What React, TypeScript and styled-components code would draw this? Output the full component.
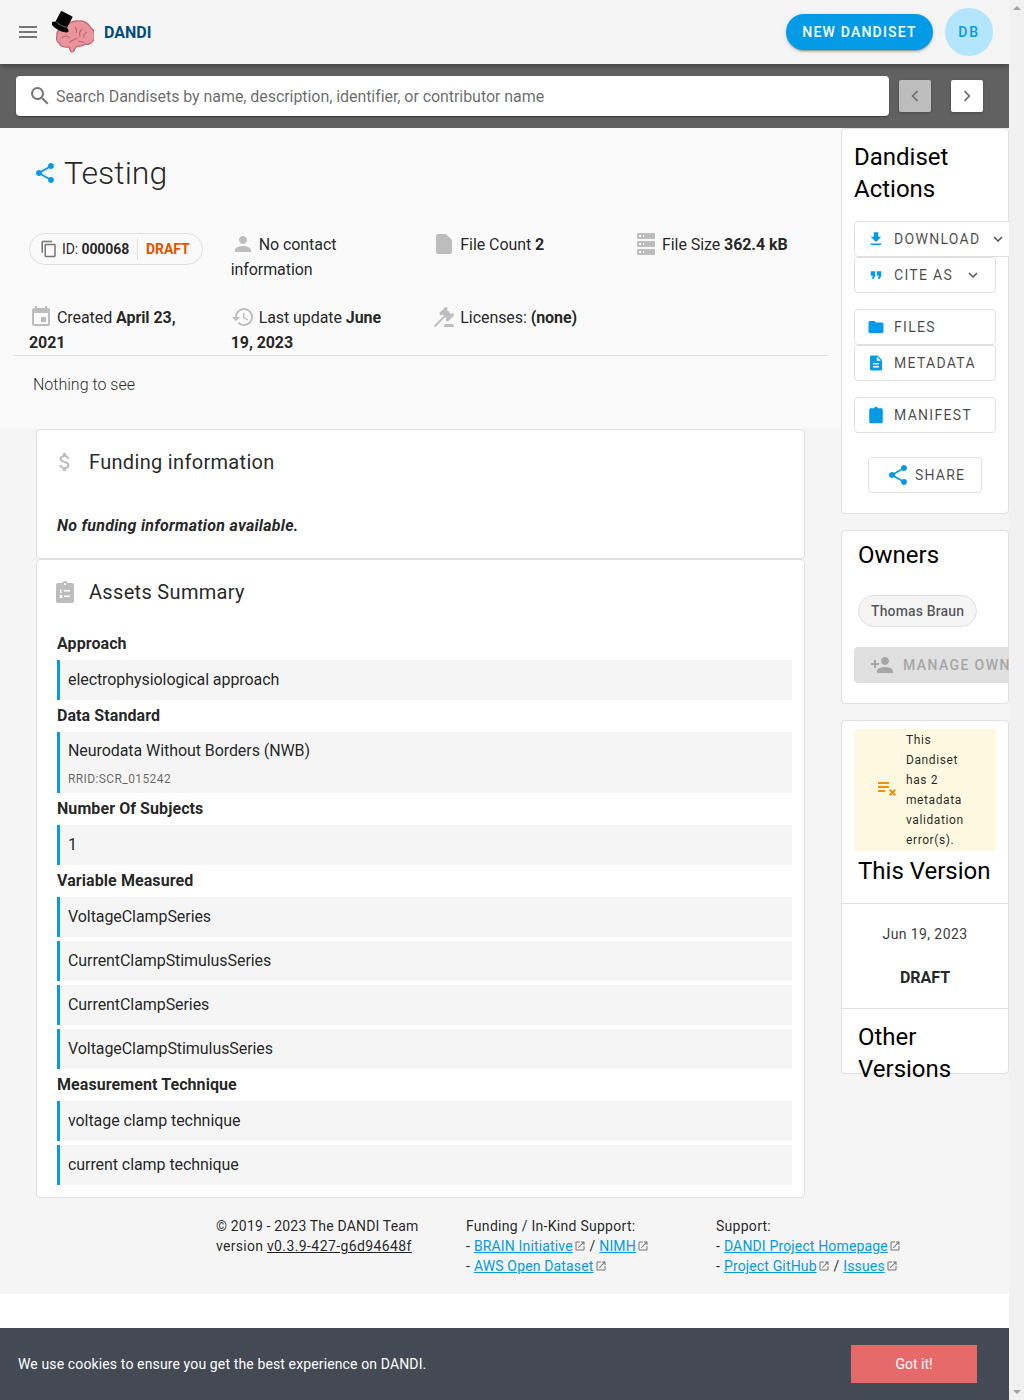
import { ReactNode } from "react";
import styled, { createGlobalStyle } from "styled-components";
import {
  MdAttachMoney,
  MdChevronLeft,
  MdChevronRight,
  MdContentCopy,
  MdDescription,
  MdEvent,
  MdExpandMore,
  MdFileDownload,
  MdFolder,
  MdFormatQuote,
  MdHistory,
  MdMenu,
  MdOpenInNew,
  MdPerson,
  MdPersonAdd,
  MdSearch,
  MdShare,
} from "react-icons/md";

const BLUE = "#039be5";
const ICON_GREY = "#bdbdbd";

const GlobalStyle = createGlobalStyle`
  html, body {
    margin: 0;
    padding: 0;
    background: #fff;
    overflow: hidden;
  }
  body {
    font-family: Roboto, "Liberation Sans", sans-serif;
    color: rgba(0, 0, 0, 0.87);
  }
  * {
    box-sizing: border-box;
  }
`;

const Frame = styled.div`
  display: flex;
  width: 1024px;
  height: 1400px;
  overflow: hidden;
`;

const Page = styled.div`
  display: flex;
  flex-direction: column;
  width: 1009px;
  height: 1400px;
  overflow: hidden;
  background: #fff;
`;

const ScrollTrack = styled.div`
  display: flex;
  flex-direction: column;
  justify-content: space-between;
  align-items: center;
  width: 15px;
  padding: 6px 0;
  background: #f1f1f1;
`;

const ScrollArrow = styled.span<{ $down?: boolean }>`
  width: 0;
  height: 0;
  border-left: 4px solid transparent;
  border-right: 4px solid transparent;
  ${(p) =>
    p.$down
      ? "border-top: 4px solid #a3a3a3;"
      : "border-bottom: 4px solid #a3a3a3;"}
`;

/* top bar */
const AppBar = styled.header`
  position: relative;
  z-index: 2;
  display: flex;
  align-items: center;
  flex: none;
  height: 64px;
  padding: 0 16px;
  background: #f5f5f5;
  box-shadow: 0 2px 4px -1px rgba(0, 0, 0, 0.2), 0 4px 5px rgba(0, 0, 0, 0.14);
`;

const MenuButton = styled.span`
  display: flex;
  color: #757575;
  font-size: 24px;
`;

const LogoBox = styled.span`
  display: flex;
  margin-left: 12px;
`;

const BrandName = styled.span`
  margin-left: 10px;
  font-size: 16px;
  font-weight: 700;
  color: #004c7f;
`;

const Spacer = styled.div`
  flex: 1;
`;

const NewButton = styled.button`
  width: 147px;
  height: 36px;
  padding: 0;
  border: none;
  border-radius: 18px;
  background: ${BLUE};
  color: #fff;
  font: 500 14px Roboto, sans-serif;
  letter-spacing: 1.2px;
  box-shadow: 0 3px 1px -2px rgba(0, 0, 0, 0.2), 0 2px 2px rgba(0, 0, 0, 0.14),
    0 1px 5px rgba(0, 0, 0, 0.12);
`;

const Avatar = styled.span`
  display: flex;
  align-items: center;
  justify-content: center;
  width: 48px;
  height: 48px;
  margin-left: 12px;
  border-radius: 50%;
  background: #b3e5fc;
  color: ${BLUE};
  font-size: 14px;
  font-weight: 500;
  letter-spacing: 1.8px;
`;

/* search strip */
const SearchStrip = styled.div`
  display: flex;
  align-items: center;
  flex: none;
  height: 64px;
  padding: 0 26px 0 16px;
  background: #616161;
`;

const SearchBox = styled.div`
  display: flex;
  align-items: center;
  width: 873px;
  height: 40px;
  padding-left: 12px;
  border-radius: 4px;
  background: #fff;
  color: rgba(0, 0, 0, 0.6);
  font-size: 16px;
  letter-spacing: -0.06px;
  box-shadow: 0 2px 1px -1px rgba(0, 0, 0, 0.2), 0 1px 1px rgba(0, 0, 0, 0.14),
    0 1px 3px rgba(0, 0, 0, 0.12);
  svg {
    margin-right: 4px;
    color: #757575;
  }
`;

const PageButton = styled.span<{ $disabled?: boolean }>`
  display: flex;
  align-items: center;
  justify-content: center;
  width: 32px;
  height: 32px;
  margin-left: ${(p) => (p.$disabled ? "10px" : "20px")};
  border-radius: 2px;
  background: ${(p) => (p.$disabled ? ICON_GREY : "#fff")};
  color: #757575;
  box-shadow: 0 1px 3px rgba(0, 0, 0, 0.25);
`;

/* body */
const Body = styled.div`
  display: flex;
  flex: none;
  height: 1070px;
  background: #f5f5f5;
`;

const LeftColumn = styled.main`
  width: 841px;
  flex: none;
`;

const HeaderPanel = styled.section`
  height: 301px;
  padding: 25px 13px 0 14px;
  border-radius: 4px 4px 0 0;
  background: #fafafa;
`;

const TitleRow = styled.div`
  display: flex;
  align-items: center;
  height: 40px;
  padding-left: 19px;
`;

const DandisetTitle = styled.h1`
  margin: 0 0 0 7px;
  font-size: 32px;
  font-weight: 300;
  line-height: 40px;
`;

const MetaGrid = styled.div`
  display: grid;
  grid-template-columns: repeat(4, 201.67px);
  grid-template-rows: 50px 50px;
  row-gap: 23px;
  margin-top: 39px;
  padding: 0 0 0 15px;
  line-height: 25px;
`;

const MetaItem = styled.div`
  max-width: 172px;
  font-size: 16px;
  letter-spacing: -0.07px;
  svg {
    margin-right: 4px;
    color: ${ICON_GREY};
    vertical-align: -6px;
  }
`;

const IdChip = styled.div`
  display: inline-flex;
  align-items: center;
  width: 174px;
  height: 32px;
  margin-top: 1px;
  padding-left: 10px;
  border: 1px solid #e0e0e0;
  border-radius: 16px;
  font-size: 14px;
  line-height: 20px;
  letter-spacing: -0.1px;
  white-space: nowrap;
  svg {
    margin-right: 4px;
    color: #757575;
  }
`;

const ChipDivider = styled.span`
  width: 1px;
  height: 22px;
  margin: 0 8px;
  background: #e0e0e0;
`;

const DraftTag = styled.strong`
  color: #e65100;
`;

const Divider = styled.hr`
  margin: 0;
  border: none;
  border-top: 1px solid #e0e0e0;
`;

const Overview = styled.p`
  margin: 17px 0 0 19px;
  font-size: 16px;
  font-weight: 300;
  line-height: 24px;
`;

const InfoCard = styled.section`
  width: 769px;
  margin-left: 36px;
  padding: 0 12px 0 20px;
  border: 1px solid #e0e0e0;
  border-radius: 4px;
  background: #fff;
`;

const CardTitle = styled.h2`
  display: flex;
  align-items: center;
  height: 24px;
  margin: 20px 0 0 -4px;
  font-size: 20px;
  font-weight: 400;
  letter-spacing: 0.32px;
  svg {
    flex: none;
    margin-right: 12px;
    color: ${ICON_GREY};
  }
`;

const FundingCard = styled(InfoCard)`
  height: 130px;
  overflow: hidden;
`;

const AssetsCard = styled(InfoCard)`
  height: 639px;
  padding-bottom: 8px;
`;

const EmptyNote = styled.p`
  margin: 40px 0 0;
  font-size: 16px;
  font-weight: 700;
  font-style: italic;
  line-height: 24px;
  letter-spacing: 0.27px;
`;

const AssetList = styled.div`
  margin-top: 28px;
`;

const AssetLabel = styled.div`
  height: 24px;
  margin-bottom: 4px;
  font-size: 16px;
  font-weight: 700;
  line-height: 24px;
  letter-spacing: 0.08px;
`;

const AssetItem = styled.div<{ $noted?: boolean }>`
  display: flex;
  flex-direction: column;
  justify-content: center;
  min-height: 40px;
  margin-bottom: 4px;
  padding: ${(p) => (p.$noted ? "7px 0 2px 8px" : "0 0 0 8px")};
  border-left: 3px solid ${BLUE};
  background: #f5f5f5;
  font-size: 16px;
  line-height: 24px;
  letter-spacing: -0.07px;
`;

const AssetNote = styled.span`
  margin-top: 4px;
  font-size: 12px;
  line-height: 24px;
  color: rgba(0, 0, 0, 0.6);
  letter-spacing: 0.4px;
`;

/* sidebar */
const Sidebar = styled.aside`
  display: flex;
  flex-direction: column;
  width: 168px;
  flex: none;
`;

const SideCard = styled.section<{ $height: number; $gap?: number }>`
  flex: none;
  height: ${(p) => p.$height}px;
  margin-top: ${(p) => p.$gap ?? 0}px;
  border: 1px solid #e0e0e0;
  border-radius: 4px;
  background: #fff;
  color: #000;
`;

const SideHeading = styled.h3<{ $inset?: number; $top?: number }>`
  margin: ${(p) => p.$top ?? 0}px 0 0 ${(p) => p.$inset ?? 16}px;
  font-size: 24px;
  font-weight: 400;
  line-height: 32px;
`;

const ActionStack = styled.div`
  display: flex;
  flex-direction: column;
  align-items: flex-start;
  padding-left: 12px;
`;

const ActionButton = styled.span<{ $wide?: boolean; $top?: number }>`
  display: flex;
  align-items: center;
  flex: none;
  width: ${(p) => (p.$wide ? "165px" : "142px")};
  height: 36px;
  margin-top: ${(p) => p.$top ?? 0}px;
  padding-left: 12px;
  border: 1px solid #e0e0e0;
  border-radius: 4px;
  background: #fff;
  color: rgba(0, 0, 0, 0.72);
  font-size: 14px;
  letter-spacing: 1.3px;
  white-space: nowrap;
`;

const ActionIcon = styled.span`
  display: flex;
  justify-content: center;
  width: 18px;
  margin-right: 9px;
  color: ${BLUE};
`;

const Caret = styled.span<{ $left: number }>`
  display: flex;
  margin-left: ${(p) => p.$left}px;
  color: #555;
`;

const ShareButton = styled.span`
  display: flex;
  align-items: center;
  width: 114px;
  height: 36px;
  margin: 24px 0 0 26px;
  padding-left: 17px;
  border: 1px solid #e0e0e0;
  border-radius: 4px;
  color: rgba(0, 0, 0, 0.72);
  font-size: 14px;
  letter-spacing: 1.2px;
  svg {
    margin-right: 5px;
    color: ${BLUE};
  }
`;

const OwnerChip = styled.span`
  display: inline-flex;
  align-items: center;
  height: 32px;
  margin: 24px 0 0 16px;
  padding: 0 12px;
  border: 1px solid #e0e0e0;
  border-radius: 16px;
  background: #f5f5f5;
  color: rgba(0, 0, 0, 0.66);
  font-size: 14px;
  font-weight: 500;
  letter-spacing: 0.15px;
`;

const ManageButton = styled.span`
  display: flex;
  align-items: center;
  width: 190px;
  height: 36px;
  margin: 20px 0 0 12px;
  padding-left: 16px;
  border-radius: 4px;
  background: #e0e0e0;
  color: #a6a6a6;
  font-size: 14px;
  font-weight: 500;
  letter-spacing: 1.4px;
  white-space: nowrap;
  svg {
    margin-right: 9px;
  }
`;

const ValidationAlert = styled.div`
  display: flex;
  align-items: center;
  width: 142px;
  height: 122px;
  margin: 8px 0 0 12px;
  padding-left: 23px;
  border-radius: 4px;
  background: #fff8e1;
  color: rgba(0, 0, 0, 0.87);
  font-size: 12px;
  line-height: 20px;
  letter-spacing: 0.6px;
  svg {
    flex: none;
    margin-right: 9px;
  }
`;

const AlertText = styled.span`
  width: 62px;
`;

const VersionDivider = styled.hr<{ $top: number }>`
  margin: ${(p) => p.$top}px 0 0;
  border: none;
  border-top: 1px solid #e0e0e0;
`;

const VersionDate = styled.div`
  margin-top: 20px;
  text-align: center;
  font-size: 14px;
  line-height: 20px;
  letter-spacing: 0.4px;
  color: rgba(0, 0, 0, 0.8);
`;

const VersionName = styled.div`
  margin-top: 24px;
  text-align: center;
  font-size: 16px;
  font-weight: 700;
  line-height: 20px;
  color: rgba(0, 0, 0, 0.87);
`;

/* footer */
const Footer = styled.footer`
  display: grid;
  grid-template-columns: repeat(3, 250px);
  flex: none;
  height: 96px;
  padding: 18px 0 0 216px;
  background: #f5f5f5;
  font-size: 14px;
  line-height: 20px;
  letter-spacing: 0.28px;
`;

const FooterLine = styled.div<{ $tight?: boolean }>`
  white-space: nowrap;
  ${(p) => p.$tight && "letter-spacing: 0.17px;"}
`;

const VersionLink = styled.span`
  text-decoration: underline;
  letter-spacing: 0.4px;
`;

const Ext = styled.a`
  color: ${BLUE};
  text-decoration: underline;
  letter-spacing: 0.15px;
`;

const ExtMark = styled.span`
  display: inline-block;
  width: 12px;
  margin-left: 1px;
  color: #757575;
  svg {
    vertical-align: -1px;
  }
`;

const FooterGap = styled.div`
  flex: none;
  height: 34px;
`;

const CookieBar = styled.div`
  display: flex;
  align-items: center;
  justify-content: space-between;
  flex: none;
  height: 72px;
  padding: 0 32px 0 18px;
  background: #434a54;
  color: #fff;
  font-size: 14px;
  letter-spacing: 0.13px;
`;

const CookieButton = styled.button`
  width: 126px;
  height: 38px;
  border: none;
  background: #e76a6a;
  color: #fff;
  font: 400 14px Roboto, sans-serif;
`;

function BrainLogo() {
  return (
    <svg width="42" height="42" viewBox="0 0 42 42" aria-hidden="true">
      <path
        d="M5 25C4 20 8 17 12 18C15 12 21 9 27 10C32 9 37 13 39 17C43 20 44 26 41 30C39 33 36 34 33 33C30 36 26 35 24 36C23 38 22 41 20 41C18 41 18 38 17 36C12 37 8 35 7 32C5 31 4 28 5 25Z"
        fill="#e8959b"
        stroke="#c2666f"
        strokeWidth="1.2"
      />
      <path
        d="M10 27c3-3 6-2 8 0m-1 5c2-3 6-3 8-5m5-9c-2 2-3 5-2 8m7-5c-2 1-4 3-3 6m-9-11c2 2 2 4 1 6m8 9c-2 0-4 0-6-1"
        fill="none"
        stroke="#c2666f"
        strokeWidth="1.1"
      />
      <g transform="translate(8 16) rotate(28)">
        <rect x="-6.5" y="-15" width="13" height="15" rx="1" fill="#000" />
        <ellipse cx="0" cy="0" rx="9.5" ry="3.4" fill="#000" />
        <path d="M-6-3c3 1.5 9 1.5 12 0" fill="none" stroke="#9a9a9a" strokeWidth="0.6" />
      </g>
    </svg>
  );
}

function ClipboardNumbers({ size }: { size: number }) {
  return (
    <svg width={size} height={size} viewBox="0 0 24 24" fill="currentColor" aria-hidden="true">
      <path d="M19 3h-4.2C14.4 1.8 13.3 1 12 1s-2.4.8-2.8 2H5c-1.1 0-2 .9-2 2v16c0 1.1.9 2 2 2h14c1.1 0 2-.9 2-2V5c0-1.1-.9-2-2-2zm-7 0c.6 0 1 .4 1 1s-.4 1-1 1-1-.4-1-1 .4-1 1-1z" />
      <path d="M7 9.5h1.4V13H7zM11 10h6v1.6h-6zM11 15.5h6v1.6h-6zM6.5 15h3v1l-1.6 1.2h1.6V18h-3v-1l1.6-1.2H6.5z" fill="#fff" />
    </svg>
  );
}

function ClipboardSolid({ size }: { size: number }) {
  return (
    <svg width={size} height={size} viewBox="0 0 24 24" fill="currentColor" aria-hidden="true">
      <path d="M19 3h-4.2C14.4 1.8 13.3 1 12 1s-2.4.8-2.8 2H5c-1.1 0-2 .9-2 2v16c0 1.1.9 2 2 2h14c1.1 0 2-.9 2-2V5c0-1.1-.9-2-2-2z" />
    </svg>
  );
}

function FileSolid() {
  return (
    <svg width="24" height="24" viewBox="0 0 24 24" fill="currentColor" aria-hidden="true">
      <path d="M6 2a2 2 0 0 0-2 2v16a2 2 0 0 0 2 2h12a2 2 0 0 0 2-2V8l-6-6z" />
    </svg>
  );
}

function ServerStack() {
  return (
    <svg width="24" height="24" viewBox="0 0 24 24" fill="currentColor" fillRule="evenodd" aria-hidden="true">
      <path d="M4,1H20A1,1 0 0,1 21,2V6A1,1 0 0,1 20,7H4A1,1 0 0,1 3,6V2A1,1 0 0,1 4,1M4,9H20A1,1 0 0,1 21,10V14A1,1 0 0,1 20,15H4A1,1 0 0,1 3,14V10A1,1 0 0,1 4,9M4,17H20A1,1 0 0,1 21,18V22A1,1 0 0,1 20,23H4A1,1 0 0,1 3,22V18A1,1 0 0,1 4,17M9,5H10V3H9V5M9,13H10V11H9V13M9,21H10V19H9V21M5,3V5H7V3H5M5,11V13H7V11H5M5,19V21H7V19H5Z" />
    </svg>
  );
}

function Gavel() {
  return (
    <svg width="24" height="24" viewBox="0 0 24 24" fill="currentColor" aria-hidden="true">
      <path d="M2.3,20.28L11.9,10.68L10.5,9.26L9.78,9.97C9.39,10.36 8.76,10.36 8.37,9.97L7.66,9.26C7.27,8.87 7.27,8.24 7.66,7.85L13.32,2.19C13.71,1.8 14.34,1.8 14.73,2.19L15.44,2.9C15.83,3.29 15.83,3.92 15.44,4.31L14.73,5L16.15,6.43C16.54,6.04 17.17,6.04 17.56,6.43C17.95,6.82 17.95,7.46 17.56,7.85L18.97,9.26L19.68,8.55C20.07,8.16 20.71,8.16 21.1,8.55L21.8,9.26C22.19,9.65 22.19,10.29 21.8,10.68L16.15,16.33C15.76,16.72 15.12,16.72 14.73,16.33L14.03,15.63C13.63,15.24 13.63,14.6 14.03,14.21L14.73,13.5L13.32,12.09L3.71,21.7C3.32,22.09 2.69,22.09 2.3,21.7C1.91,21.31 1.91,20.67 2.3,20.28M20,19A2,2 0 0,1 22,21V22H12V21A2,2 0 0,1 14,19H20Z" />
    </svg>
  );
}

function PlaylistError() {
  return (
    <svg width="20" height="20" viewBox="0 0 20 20" fill="#fb8c00" aria-hidden="true">
      <path d="M1 2h11v2H1zM1 6h11v2H1zM1 10h7v2H1z" />
      <path d="M12 10.4l1.4-1.4 2.1 2.1L17.6 9l1.4 1.4-2.1 2.1 2.1 2.1-1.4 1.4-2.1-2.1-2.1 2.1-1.4-1.4 2.1-2.1z" />
    </svg>
  );
}

function ExternalLink({ children }: { children: ReactNode }) {
  return (
    <>
      <Ext href="#">{children}</Ext>
      <ExtMark>
        <MdOpenInNew size={12} />
      </ExtMark>
    </>
  );
}

const assetGroups: { label: string; items: { text: string; note?: string }[] }[] = [
  { label: "Approach", items: [{ text: "electrophysiological approach" }] },
  {
    label: "Data Standard",
    items: [{ text: "Neurodata Without Borders (NWB)", note: "RRID:SCR_015242" }],
  },
  { label: "Number Of Subjects", items: [{ text: "1" }] },
  {
    label: "Variable Measured",
    items: [
      { text: "VoltageClampSeries" },
      { text: "CurrentClampStimulusSeries" },
      { text: "CurrentClampSeries" },
      { text: "VoltageClampStimulusSeries" },
    ],
  },
  {
    label: "Measurement Technique",
    items: [{ text: "voltage clamp technique" }, { text: "current clamp technique" }],
  },
];

export default function App() {
  return (
    <Frame>
      <GlobalStyle />
      <Page>
        <AppBar>
          <MenuButton>
            <MdMenu size={24} />
          </MenuButton>
          <LogoBox>
            <BrainLogo />
          </LogoBox>
          <BrandName>DANDI</BrandName>
          <Spacer />
          <NewButton>NEW DANDISET</NewButton>
          <Avatar>DB</Avatar>
        </AppBar>

        <SearchStrip>
          <SearchBox>
            <MdSearch size={24} />
            Search Dandisets by name, description, identifier, or contributor name
          </SearchBox>
          <PageButton $disabled>
            <MdChevronLeft size={22} />
          </PageButton>
          <PageButton>
            <MdChevronRight size={22} />
          </PageButton>
        </SearchStrip>

        <Body>
          <LeftColumn>
            <HeaderPanel>
              <TitleRow>
                <MdShare size={24} color={BLUE} />
                <DandisetTitle>Testing</DandisetTitle>
              </TitleRow>
              <MetaGrid>
                <div>
                  <IdChip>
                    <MdContentCopy size={18} />
                    ID:&nbsp;<strong>000068</strong>
                    <ChipDivider />
                    <DraftTag>DRAFT</DraftTag>
                  </IdChip>
                </div>
                <MetaItem>
                  <MdPerson size={24} />
                  No contact information
                </MetaItem>
                <MetaItem>
                  <FileSolid />
                  File Count <strong>2</strong>
                </MetaItem>
                <MetaItem>
                  <ServerStack />
                  File Size <strong>362.4 kB</strong>
                </MetaItem>
                <MetaItem>
                  <MdEvent size={24} />
                  Created <strong>April 23, 2021</strong>
                </MetaItem>
                <MetaItem>
                  <MdHistory size={24} />
                  Last update <strong>June 19, 2023</strong>
                </MetaItem>
                <MetaItem>
                  <Gavel />
                  Licenses: <strong>(none)</strong>
                </MetaItem>
              </MetaGrid>
              <Divider />
              <Overview>Nothing to see</Overview>
            </HeaderPanel>

            <FundingCard>
              <CardTitle>
                <MdAttachMoney size={24} />
                Funding information
              </CardTitle>
              <EmptyNote>No funding information available.</EmptyNote>
            </FundingCard>

            <AssetsCard>
              <CardTitle>
                <ClipboardNumbers size={24} />
                Assets Summary
              </CardTitle>
              <AssetList>
                {assetGroups.map((group) => (
                  <div key={group.label}>
                    <AssetLabel>{group.label}</AssetLabel>
                    {group.items.map((item) => (
                      <AssetItem key={item.text} $noted={!!item.note}>
                        {item.text}
                        {item.note && <AssetNote>{item.note}</AssetNote>}
                      </AssetItem>
                    ))}
                  </div>
                ))}
              </AssetList>
            </AssetsCard>
          </LeftColumn>

          <Sidebar>
            <SideCard $height={386}>
              <SideHeading $inset={12} $top={12}>
                Dandiset Actions
              </SideHeading>
              <ActionStack>
                <ActionButton $wide $top={16}>
                  <ActionIcon>
                    <MdFileDownload size={18} />
                  </ActionIcon>
                  DOWNLOAD
                  <Caret $left={8}>
                    <MdExpandMore size={18} />
                  </Caret>
                </ActionButton>
                <ActionButton>
                  <ActionIcon>
                    <MdFormatQuote size={18} />
                  </ActionIcon>
                  CITE AS
                  <Caret $left={11}>
                    <MdExpandMore size={18} />
                  </Caret>
                </ActionButton>
                <ActionButton $top={16}>
                  <ActionIcon>
                    <MdFolder size={18} />
                  </ActionIcon>
                  FILES
                </ActionButton>
                <ActionButton>
                  <ActionIcon>
                    <MdDescription size={18} />
                  </ActionIcon>
                  METADATA
                </ActionButton>
                <ActionButton $top={16}>
                  <ActionIcon>
                    <ClipboardSolid size={18} />
                  </ActionIcon>
                  MANIFEST
                </ActionButton>
              </ActionStack>
              <ShareButton>
                <MdShare size={24} />
                SHARE
              </ShareButton>
            </SideCard>

            <SideCard $height={174} $gap={16}>
              <SideHeading $top={8}>Owners</SideHeading>
              <OwnerChip>Thomas Braun</OwnerChip>
              <ManageButton>
                <MdPersonAdd size={24} />
                MANAGE OWNERS
              </ManageButton>
            </SideCard>

            <SideCard $height={354} $gap={16}>
              <ValidationAlert>
                <PlaylistError />
                <AlertText>This Dandiset has 2 metadata validation error(s).</AlertText>
              </ValidationAlert>
              <SideHeading $top={4}>This Version</SideHeading>
              <VersionDivider $top={16} />
              <VersionDate>Jun 19, 2023</VersionDate>
              <VersionName>DRAFT</VersionName>
              <VersionDivider $top={20} />
              <SideHeading $top={12}>Other Versions</SideHeading>
            </SideCard>
          </Sidebar>
        </Body>

        <Footer>
          <div>
            <FooterLine $tight>© 2019 - 2023 The DANDI Team</FooterLine>
            <FooterLine>
              version <VersionLink>v0.3.9-427-g6d94648f</VersionLink>
            </FooterLine>
          </div>
          <div>
            <FooterLine>Funding / In-Kind Support:</FooterLine>
            <FooterLine>
              - <ExternalLink>BRAIN Initiative</ExternalLink> / <ExternalLink>NIMH</ExternalLink>
            </FooterLine>
            <FooterLine>
              - <ExternalLink>AWS Open Dataset</ExternalLink>
            </FooterLine>
          </div>
          <div>
            <FooterLine>Support:</FooterLine>
            <FooterLine>
              - <ExternalLink>DANDI Project Homepage</ExternalLink>
            </FooterLine>
            <FooterLine>
              - <ExternalLink>Project GitHub</ExternalLink> / <ExternalLink>Issues</ExternalLink>
            </FooterLine>
          </div>
        </Footer>
        <FooterGap />

        <CookieBar>
          We use cookies to ensure you get the best experience on DANDI.
          <CookieButton>Got it!</CookieButton>
        </CookieBar>
      </Page>
      <ScrollTrack>
        <ScrollArrow />
        <ScrollArrow $down />
      </ScrollTrack>
    </Frame>
  );
}
